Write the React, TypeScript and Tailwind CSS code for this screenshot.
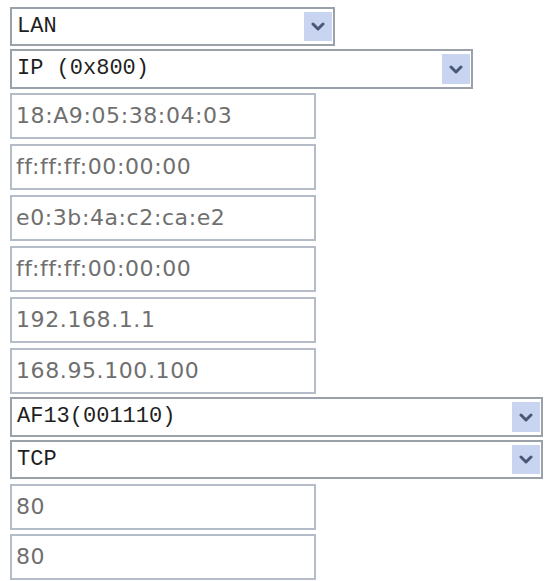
import React from "react";

function Chevron() {
  return (
    <svg width="14" height="9" viewBox="0 0 14 9">
      <path d="M2 2 L7 7 L12 2" fill="none" stroke="#4a5878" strokeWidth="3" strokeLinecap="round" strokeLinejoin="round" />
    </svg>
  );
}

function Select({ label, className }: { label: string; className: string }) {
  return (
    <div className={`flex items-center border-2 border-[#9ba1a9] bg-white ${className}`}>
      <span
        className="flex-1 whitespace-pre pl-[5px] text-[22px] leading-none text-[#1e1e1e]"
        style={{ fontFamily: '"Liberation Mono", "Noto Sans CJK SC", monospace' }}
      >
        {label}
      </span>
      <div className="mr-[1px] flex h-[calc(100%-6px)] w-[28px] items-center justify-center bg-[#c9d4f1]">
        <Chevron />
      </div>
    </div>
  );
}

function Field({ value }: { value: string }) {
  return (
    <div className="flex h-[46px] w-[306px] items-center border-2 border-[#b3bcc7] bg-white pl-[4px]">
      <span
        className="text-[22px] leading-none tracking-[0.6px] text-[#6f6f6f]"
        style={{ fontFamily: '"DejaVu Sans", Verdana, sans-serif' }}
      >
        {value}
      </span>
    </div>
  );
}

export default function App() {
  const macs = ["18:A9:05:38:04:03", "ff:ff:ff:00:00:00", "e0:3b:4a:c2:ca:e2", "ff:ff:ff:00:00:00"];
  const ips = ["192.168.1.1", "168.95.100.100"];
  const ports = ["80", "80"];

  return (
    <div className="min-h-[581px] w-[548px] bg-white pl-[10px] pt-[7px]">
      <div className="flex flex-col items-start">
        <Select label="LAN" className="h-[39px] w-[325px]" />
        <Select label="IP (0x800)" className="mt-[3px] h-[40px] w-[463px]" />
        <div className="mt-[4px] flex flex-col gap-[5px]">
          {macs.concat(ips).map((v, i) => (
            <Field key={i} value={v} />
          ))}
        </div>
        <Select label="AF13(001110)" className="mt-[3px] h-[40px] w-[533px]" />
        <Select label="TCP" className="mt-[3px] h-[39px] w-[533px]" />
        <div className="mt-[5px] flex flex-col gap-[4px]">
          {ports.map((v, i) => (
            <Field key={i} value={v} />
          ))}
        </div>
      </div>
    </div>
  );
}
